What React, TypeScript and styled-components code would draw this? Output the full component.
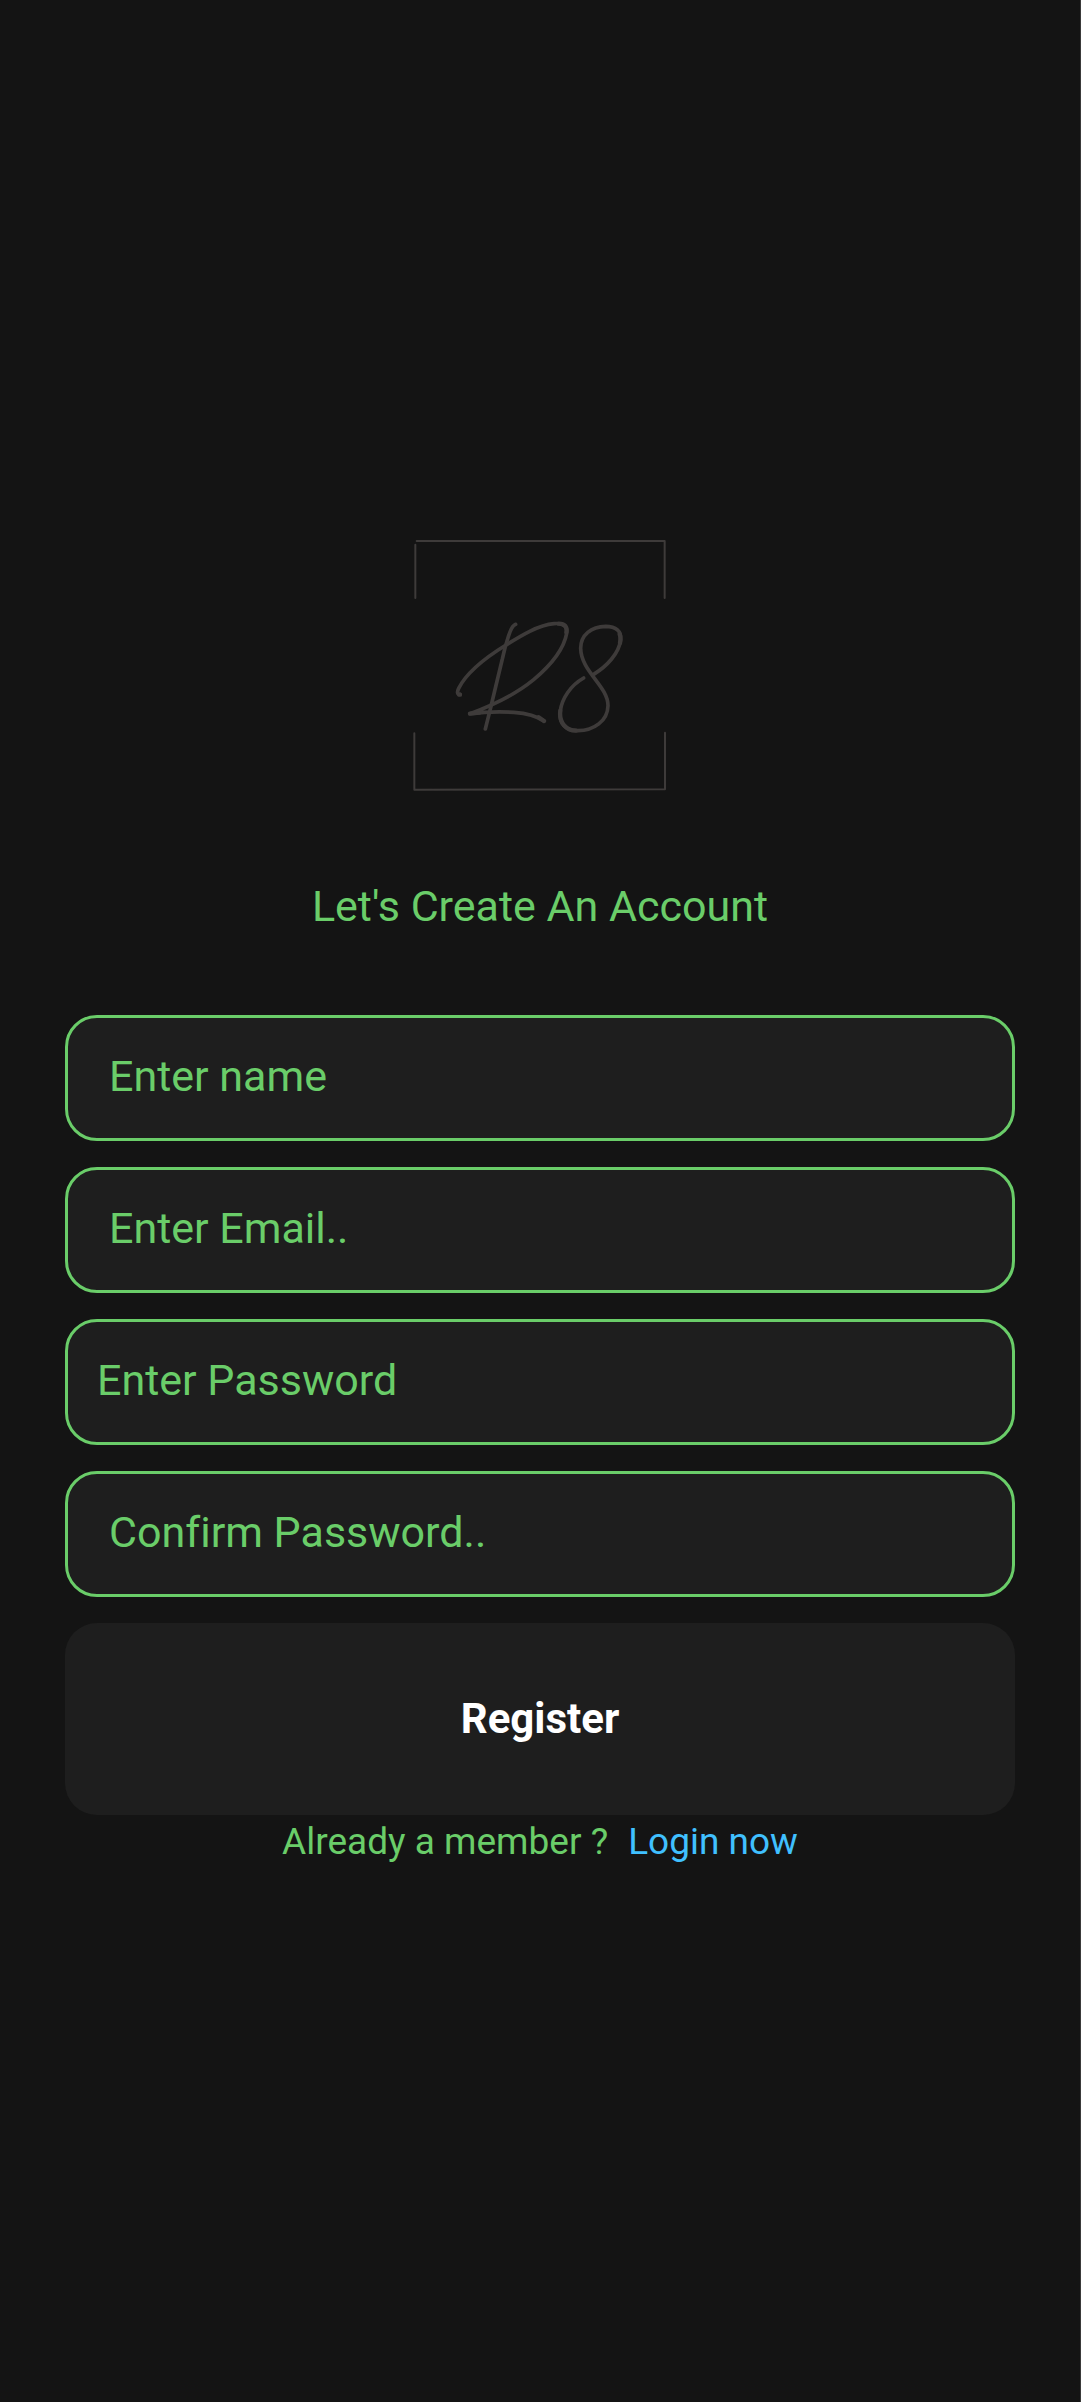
import React from "react";
import styled, { createGlobalStyle } from "styled-components";

const GlobalStyle = createGlobalStyle`
  *, *::before, *::after { box-sizing: border-box; }
  body {
    margin: 0;
    background: #ffffff;
    font-family: Roboto, "Noto Sans", sans-serif;
    font-variant-ligatures: none;
  }
`;

const green = "#6acd69";
const surface = "#1e1e1e";

const Page = styled.main`
  display: flex;
  flex-direction: column;
  align-items: center;
  justify-content: center;
  min-height: 100vh;
  margin-right: 1px;
  padding: 0 65px;
  border-right: 1px solid #3a3a3a;
  background: #141414;
  color: ${green};
`;

const Logo = styled.svg`
  display: block;
  width: 254px;
  height: 252px;
`;

const Title = styled.h1`
  margin: 90px 0 84px;
  font-size: 43px;
  font-weight: 400;
  line-height: 50px;
`;

const Form = styled.form`
  display: flex;
  flex-direction: column;
  gap: 26px;
  width: 100%;
`;

const Field = styled.input<{ $indent: number }>`
  width: 100%;
  height: 126px;
  padding: 0 28px 4px ${(p) => p.$indent}px;
  border: 3px solid ${green};
  border-radius: 32px;
  outline: none;
  background: ${surface};
  color: ${green};
  font-family: inherit;
  font-size: 43px;
  font-variant-ligatures: none;

  &::placeholder {
    color: ${green};
    opacity: 1;
  }
`;

const RegisterButton = styled.button`
  width: 100%;
  height: 192px;
  padding: 0;
  border: 0;
  border-radius: 32px;
  background: ${surface};
  color: #ffffff;
  font-family: inherit;
  font-size: 42px;
  font-weight: 700;
  cursor: pointer;
`;

const Footer = styled.p`
  display: flex;
  gap: 20px;
  margin: 5px 0 0;
  font-size: 37px;
  line-height: 44px;
`;

const LoginLink = styled.a`
  color: #40c0ff;
  text-decoration: none;
`;

const fields = [
  { label: "Enter name", type: "text", indent: 41 },
  { label: "Enter Email..", type: "email", indent: 41 },
  { label: "Enter Password", type: "password", indent: 29 },
  { label: "Confirm Password..", type: "password", indent: 41 },
];

export default function App() {
  return (
    <>
      <GlobalStyle />
      <Page>
        <Logo viewBox="41 28 762 756" fill="none" stroke="#3e3b3a" strokeLinecap="round" strokeLinejoin="round" role="img" aria-label="R8">
          <g strokeWidth="6">
            <path d="M48 205V45M52 34H796M796 34V205" />
            <path d="M45 611V780L797 779V609" />
          </g>
          <g strokeWidth="11">
            <path d="M349 284C338 288 333 302 328 318C320 342 315 360 309 388L273 538L258 598" />
            <path d="M182 494C173 496 173 486 178 476C204 424 268 378 320 346C365 318 417 286 464 282C492 279 506 290 502 311C493 362 448 412 403 450C342 500 272 530 212 552C254 547 306 546 344 548C384 551 412 559 434 574" />
            <path d="M553 445C514 467 488 506 483 543C477 585 502 604 536 603C583 603 625 574 626 528C626 469 545 426 544 356C544 315 576 291 619 290C650 290 667 305 664 330C659 372 622 410 583 434" />
          </g>
          <path strokeWidth="13" d="M478 282C497 282 504 292 501 308M212 552L240 549M418 563L434 574M661 313Q665 325 662 340M483 543C478 579 501 602 530 603M180 495H182" />
        </Logo>
        <Title>Let's Create An Account</Title>
        <Form onSubmit={(e) => e.preventDefault()}>
          {fields.map((f) => (
            <Field key={f.label} type={f.type} placeholder={f.label} aria-label={f.label} $indent={f.indent} />
          ))}
          <RegisterButton type="submit">Register</RegisterButton>
        </Form>
        <Footer>
          <span>Already a member ?</span>
          <LoginLink href="#login">Login now</LoginLink>
        </Footer>
      </Page>
    </>
  );
}
